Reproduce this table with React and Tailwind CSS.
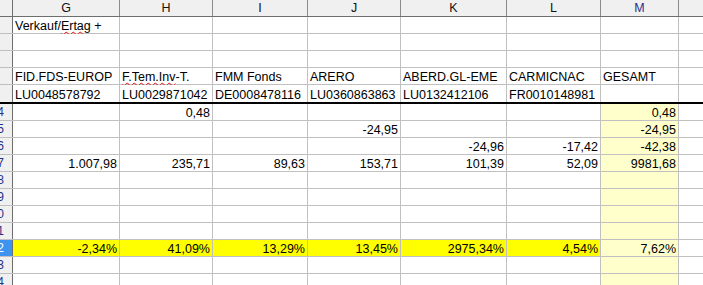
import React from 'react';

// column widths for G..M, N takes what's left
const widths = ['w-[107px]', 'w-[93px]', 'w-[95px]', 'w-[93px]', 'w-[106px]', 'w-[94px]', 'w-[78px]'];
const letters = ['G', 'H', 'I', 'J', 'K', 'L', 'M'];

const Squiggle = ({ children }) => (
  <span className="underline decoration-wavy decoration-[#e01010] [text-decoration-thickness:1px] underline-offset-[1px]">{children}</span>
);

const Cell = ({ w, bg = 'bg-white', right = false, children }) => (
  <div
    className={`${w} ${bg} ${right ? 'justify-end' : 'justify-start'} shrink-0 h-full flex items-end whitespace-nowrap border-r border-[#c0c0c0] px-[2px] leading-[14px]`}
  >
    <span>{children}</span>
  </div>
);

const RowHead = ({ n, active = false }) => (
  <div
    className={`${active ? 'bg-[#3d94ee] text-white' : 'bg-[#f0f0f0] text-[#23318a]'} w-[13px] shrink-0 h-full flex items-center justify-end overflow-hidden whitespace-nowrap border-r border-[#6e6e6e] pr-[8px] text-[12px] leading-none`}
  >
    {n}
  </div>
);

// top block of the sheet: title, fund names, ISINs
const topRows = [
  [<>Verkauf/<Squiggle>Ertag</Squiggle> +</>, '', '', '', '', '', ''],
  ['', '', '', '', '', '', ''],
  ['', '', '', '', '', '', ''],
  ['FID.FDS-EUROP', <><Squiggle>F.Tem.Inv</Squiggle>-T.</>, 'FMM Fonds', 'ARERO', 'ABERD.GL-EME', 'CARMICNAC', 'GESAMT'],
  ['LU0048578792', 'LU0029871042', 'DE0008478116', 'LU0360863863', 'LU0132412106', 'FR0010148981', ''],
];

const bodyRows = [
  { n: 14, cells: ['', '0,48', '', '', '', '', '0,48'] },
  { n: 15, cells: ['', '', '', '-24,95', '', '', '-24,95'] },
  { n: 16, cells: ['', '', '', '', '-24,96', '-17,42', '-42,38'] },
  { n: 17, cells: ['1.007,98', '235,71', '89,63', '153,71', '101,39', '52,09', '9981,68'] },
  { n: 18, cells: ['', '', '', '', '', '', ''] },
  { n: 19, cells: ['', '', '', '', '', '', ''] },
  { n: 20, cells: ['', '', '', '', '', '', ''] },
  { n: 21, cells: ['', '', '', '', '', '', ''] },
  { n: 22, mark: true, cells: ['-2,34%', '41,09%', '13,29%', '13,45%', '2975,34%', '4,54%', '7,62%'] },
  { n: 23, cells: ['', '', '', '', '', '', ''] },
  { n: 24, cells: ['', '', '', '', '', '', ''] },
];

export default function App() {
  return (
    <div className="w-[703px] h-[285px] overflow-hidden bg-white text-black text-[12.5px] font-['Liberation_Sans',Arial,sans-serif]">
      {/* column letters */}
      <div className="flex h-[17px] border-b border-[#6e6e6e] bg-[#f0f0f0]">
        <div className="w-[13px] shrink-0 h-full border-r border-[#6e6e6e]" />
        {letters.map((l, i) => (
          <div
            key={l}
            className={`${widths[i]} ${l === 'M' ? 'text-[#2b2d8f]' : 'text-[#111]'} shrink-0 h-full flex items-center justify-center border-r border-[#8a8a8a] text-[12.5px] leading-none`}
          >
            {l}
          </div>
        ))}
        <div className="flex-1 h-full" />
      </div>

      {topRows.map((cells, r) => (
        <div
          key={r}
          className={`flex ${r === 4 ? 'h-[19px] border-b-2 border-black' : 'h-[17px] border-b border-[#c0c0c0]'}`}
        >
          <RowHead n="" />
          {cells.map((c, i) => (
            <Cell key={i} w={widths[i]}>
              {c}
            </Cell>
          ))}
          <div className="flex-1 h-full" />
        </div>
      ))}

      {bodyRows.map((row) => (
        <div key={row.n} className="flex h-[17px] border-b border-[#c0c0c0]">
          <RowHead n={row.n} active={row.mark} />
          {row.cells.map((c, i) => (
            <Cell
              key={i}
              w={widths[i]}
              right
              bg={i === 6 ? 'bg-[#ffffcc]' : row.mark ? 'bg-[#ffff00]' : 'bg-white'}
            >
              {c}
            </Cell>
          ))}
          <div className="flex-1 h-full" />
        </div>
      ))}
    </div>
  );
}
